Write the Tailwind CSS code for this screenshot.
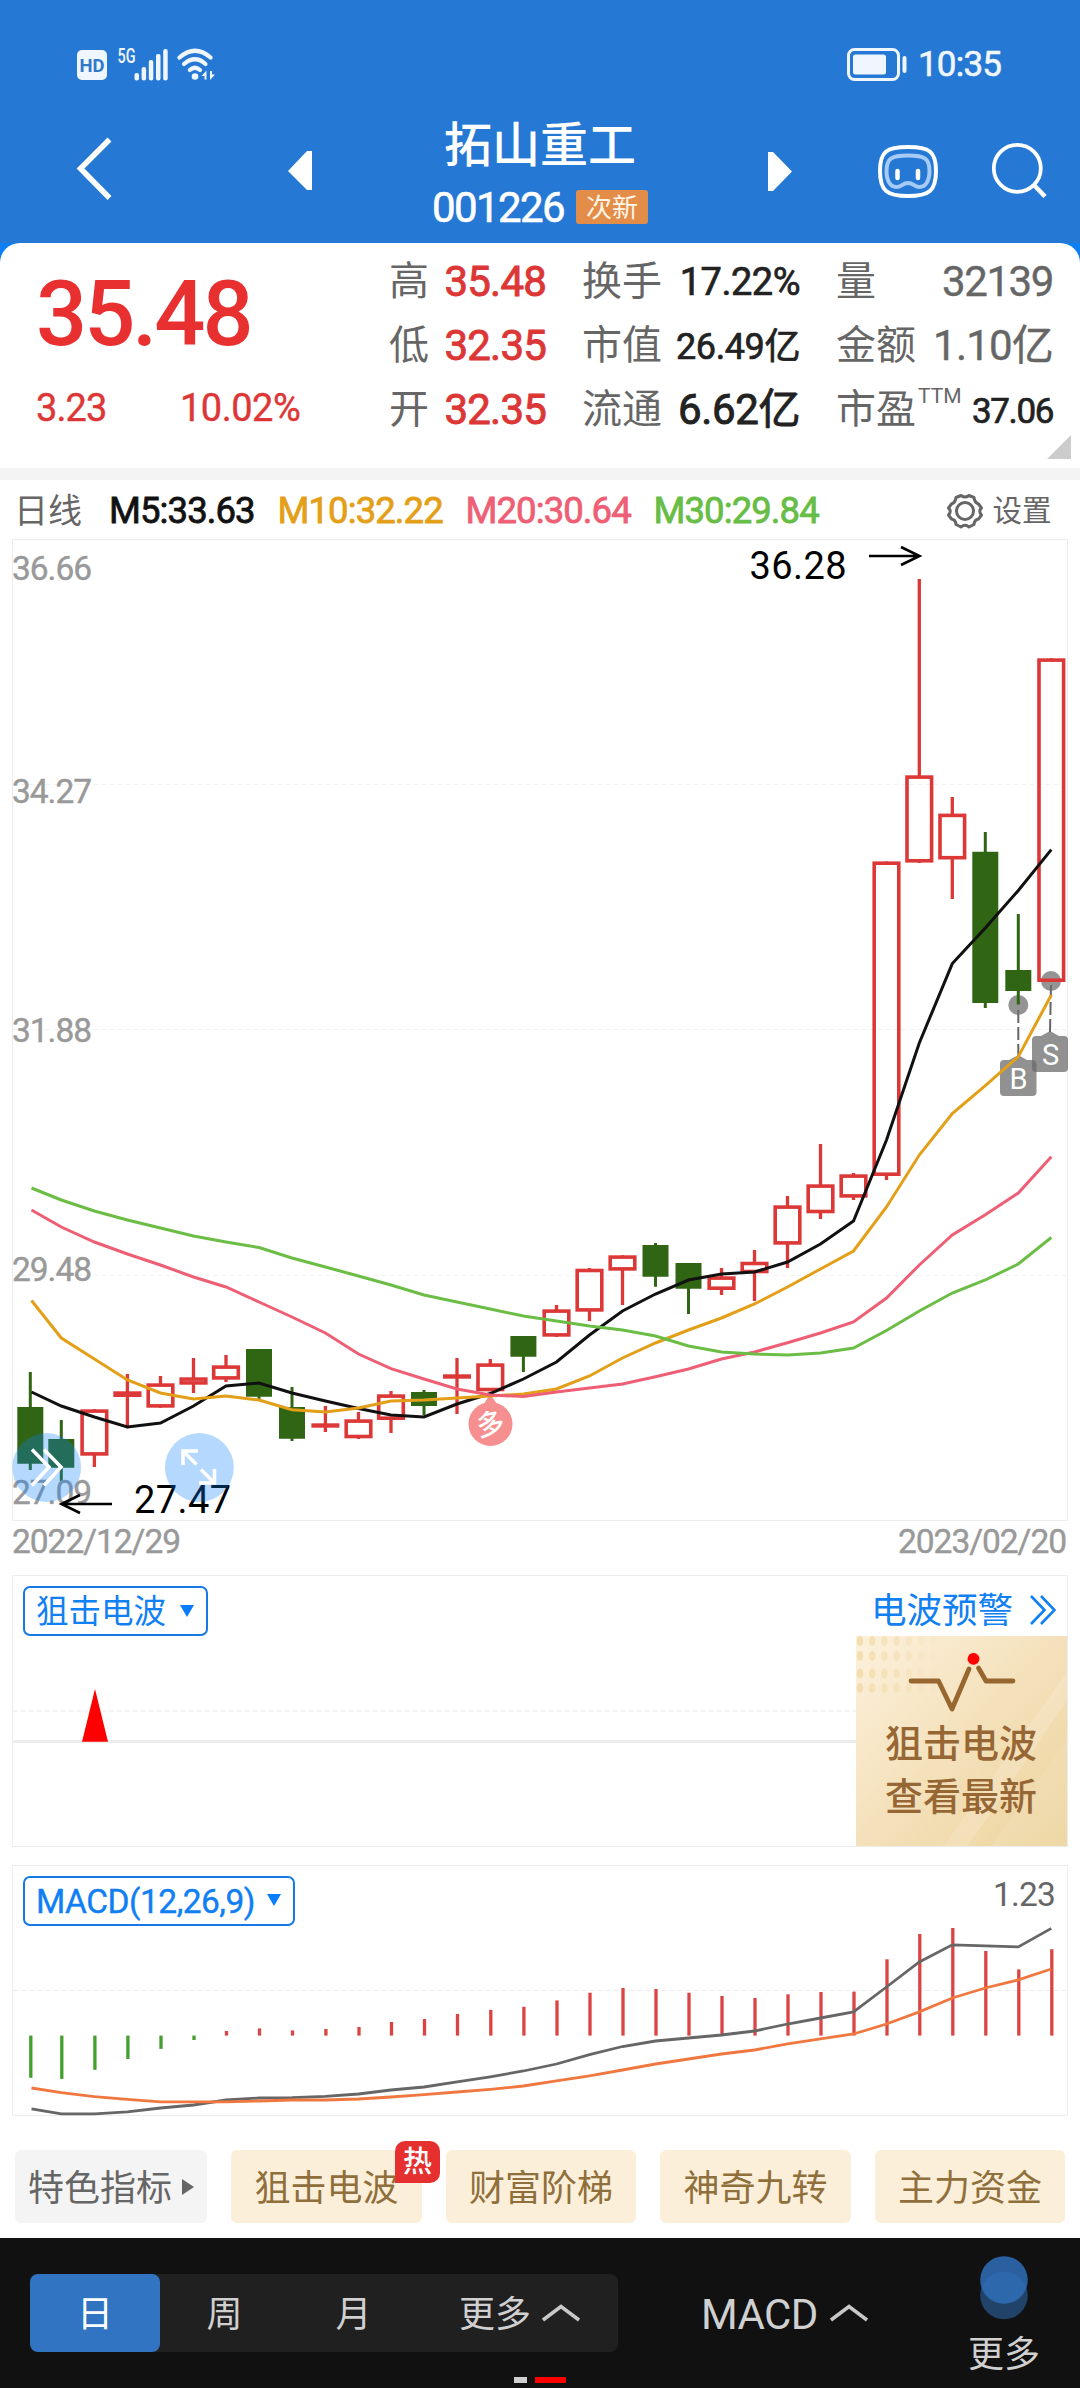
<!DOCTYPE html>
<html lang="zh-CN">
<head>
<meta charset="utf-8">
<title>拓山重工 001226</title>
<script src="https://cdn.jsdelivr.net/npm/@tailwindcss/browser@4"></script>
</head>
<body class="w-[1080px] h-[2388px] overflow-hidden bg-white font-['Roboto','Noto_Sans_CJK_SC',sans-serif] flex flex-col">

<!-- Status bar -->
<header class="bg-[#2578d4] h-[243px] shrink-0 flex flex-col text-white">
  <div class="h-[96px] flex justify-between items-start pl-[77px] pr-[75px] pt-[44px]">
    <svg class="w-[150px] h-10" viewBox="77 44 150 40" fill="#f0f6fd">
      <rect x="77" y="50" width="30" height="30" rx="5"/>
      <text x="79.500" y="71.700" font-size="19" font-weight="700" textLength="25" lengthAdjust="spacingAndGlyphs" fill="#2f78cc">HD</text>
      <text x="117.500" y="62.500" font-size="20" font-weight="500" textLength="18" lengthAdjust="spacingAndGlyphs">5G</text>
      <rect x="134.500" y="73" width="4.500" height="7.500" rx="2"/><rect x="141.600" y="67" width="4.500" height="13.500" rx="2"/><rect x="148.800" y="60" width="4.500" height="20.500" rx="2"/><rect x="156" y="54" width="4.500" height="26.500" rx="2"/><rect x="163.200" y="49" width="4.500" height="31.500" rx="2"/>
      <g fill="none" stroke="#f0f6fd" stroke-width="4.200" stroke-linecap="round"><path d="M179.500 57.500Q195 44 210.500 57.500"/><path d="M184 64Q195 54.500 205.500 64"/><path d="M189.800 70Q195 65.500 200 70"/></g>
      <circle cx="195" cy="76.500" r="3.300"/><path d="M201.500 76l5-5.500v9h-2v-3.500zM215 74.500l-5 5.500v-9h2v3.500z"/>
    </svg>
    <div class="flex items-center h-[40px] gap-[10px]">
      <svg class="w-[62px] h-10" viewBox="848 44 62 40"><rect x="850.500" y="49.500" width="50" height="30" rx="6" fill="none" stroke="#f0f6fd" stroke-width="3"/><rect x="855" y="54.500" width="33" height="20" rx="2.500" fill="#f0f6fd"/><rect x="904.500" y="56" width="4" height="17" rx="2" fill="#f0f6fd"/></svg>
      <span class="text-[35px] leading-10 pt-[2px] text-[#f0f6fd] w-[87px] tracking-[-0.8px] [-webkit-text-stroke:0.6px_#f0f6fd]">10:35</span>
    </div>
  </div>
  <div class="h-[147px] flex">
    <svg class="w-[430px] h-full shrink-0" viewBox="0 96 430 147"><path d="M109.500 139.500L80.500 168.500L109.500 198" fill="none" stroke="#fff" stroke-width="5.500"/><path d="M288 171L307 151H312V190H307z" fill="#fff"/></svg>
    <div class="w-[220px] shrink-0 flex flex-col items-center pt-[22px]">
      <h1 class="text-[48px] leading-[56px] font-medium">拓山重工</h1>
      <div class="flex items-center gap-[12px] h-[34px] mt-[16px]">
        <span class="text-[42px] leading-[34px] pt-[2px] tracking-[-1.6px] [-webkit-text-stroke:0.6px_#fff]">001226</span>
        <span class="bg-[#e48d48] rounded-[3px] w-[72px] h-[34px] text-[26px] leading-[36px] text-center text-[#fff6ea]">次新</span>
      </div>
    </div>
    <svg class="w-[430px] h-full shrink-0" viewBox="650 96 430 147" fill="none" stroke="#fff"><path d="M792 171.500L773 152H768V191H773z" fill="#fff" stroke="none"/>
      <path d="M908 147c21 0 28 4 28 24s-7 25-28 25-28-5-28-25 7-24 28-24z" stroke-width="4"/>
      <path d="M908 155.500c17 0 21.500 3 21.500 15.500 0 10-4 16-10 16-5 0-6-4-11.500-4s-6.500 4-11.500 4c-6 0-10-6-10-16 0-12.500 4.500-15.500 21.500-15.500z" stroke="#a6cbf5" stroke-width="4"/>
      <path d="M897.500 171v7M918 171v7" stroke-width="4.500" stroke-linecap="round"/>
      <circle cx="1017.300" cy="168.300" r="23.500" stroke-width="3.800"/><path d="M1033.500 184.500L1045 196.500" stroke-width="4.500"/></svg>
  </div>
</header>

<!-- Quote summary -->
<section class="bg-[#0d7ff5] h-[225px] shrink-0">
  <div class="relative bg-white rounded-t-[20px] h-full flex">
    <div class="w-[389px] pl-[36px] pt-[32px] flex flex-col shrink-0">
      <span class="text-[90px] leading-[80px] font-medium text-[#e93030] tracking-[-3px]">35.48</span>
      <div class="flex text-[38px] leading-[44px] text-[#dc3636] mt-[31px] [-webkit-text-stroke:0.4px_#dc3636]"><span class="w-[144px] tracking-[-0.9px]">3.23</span><span class="tracking-[-0.5px]">10.02%</span></div>
    </div>
    <div class="pt-[7px] grid grid-cols-[157px_218px_217px] gap-x-[36px] text-[40px] leading-[64px] h-[198px] auto-rows-[64px] text-[#666]">
      <div class="flex justify-between"><span>高</span><span class="text-[42px] tracking-[-0.8px] text-[#dc3636] [-webkit-text-stroke:0.9px_#dc3636]">35.48</span></div>
      <div class="flex justify-between items-baseline"><span>换手</span><span class="text-[38px] tracking-[-0.5px] text-[#222] [-webkit-text-stroke:0.7px_#222]">17.22%</span></div>
      <div class="flex justify-between"><span>量</span><span class="text-[42px] tracking-[-1.4px] [-webkit-text-stroke:0.4px_#666]">32139</span></div>
      <div class="flex justify-between"><span>低</span><span class="text-[42px] tracking-[-0.8px] text-[#dc3636] [-webkit-text-stroke:0.9px_#dc3636]">32.35</span></div>
      <div class="flex justify-between items-baseline"><span>市值</span><span class="text-[36px] tracking-[-0.4px] text-[#222] [-webkit-text-stroke:0.7px_#222]">26.49亿</span></div>
      <div class="flex justify-between"><span>金额</span><span class="text-[42px] tracking-[-0.8px] [-webkit-text-stroke:0.4px_#666]">1.10亿</span></div>
      <div class="flex justify-between"><span>开</span><span class="text-[42px] tracking-[-0.8px] text-[#dc3636] [-webkit-text-stroke:0.9px_#dc3636]">32.35</span></div>
      <div class="flex justify-between"><span>流通</span><span class="text-[42px] tracking-[-0.4px] text-[#222] [-webkit-text-stroke:0.9px_#222]">6.62亿</span></div>
      <div class="flex justify-between items-baseline"><span class="flex">市盈<span class="text-[21px] leading-[36px] ml-[2px]">TTM</span></span><span class="text-[35px] tracking-[-1.4px] text-[#222] [-webkit-text-stroke:0.7px_#222]">37.06</span></div>
    </div>
    <svg class="absolute right-[9px] bottom-[9px] w-6 h-6" viewBox="0 0 24 24"><path d="M24 0V24H0z" fill="#ccc"/></svg>
  </div>
</section>
<div class="h-[12px] bg-[#f4f4f4] shrink-0"></div>

<!-- Moving averages -->
<div class="h-[59px] shrink-0 flex items-center pl-[14px] pt-[3px] text-[36.500px] leading-[56px] tracking-[-0.9px]">
  <span class="text-[34px] text-[#666] w-[95px] tracking-normal">日线</span>
  <span class="w-[168.500px] text-[#111] [-webkit-text-stroke:0.8px_#111]">M5:33.63</span>
  <span class="w-[188px] text-[#e39f18] [-webkit-text-stroke:0.8px_#e39f18]">M10:32.22</span>
  <span class="w-[188px] text-[#ee5f75] [-webkit-text-stroke:0.8px_#ee5f75]">M20:30.64</span>
  <span class="w-[292px] text-[#67bd45] [-webkit-text-stroke:0.8px_#67bd45]">M30:29.84</span>
  <svg class="w-[38px] h-[38px] -mt-px" viewBox="-19 -19 38 38" fill="none" stroke="#666" stroke-width="3"><circle r="8.500"/><path stroke-linejoin="round" d="M-4 -15.500Q0 -12.500 4 -15.500L9 -13.500Q9.500 -8.500 13.500 -7L16.500 -3Q13 0 16.500 4L13.500 8Q9.500 8.500 9 13.500L4 16Q0 12.500 -4 16L-9 13.500Q-9.500 8.500 -13.500 8L-16.500 4Q-13 0 -16.500 -3L-13.500 -7Q-9.500 -8.500 -9 -13.500z"/></svg>
  <span class="text-[29.500px] text-[#666] tracking-normal ml-[9px]">设置</span>
</div>

<!-- Daily candles -->
<svg class="w-[1080px] h-[1036px] shrink-0 block" viewBox="0 539 1080 1036">
  <g fill="none" stroke="#ededed"><rect x="12.500" y="539.500" width="1055" height="981"/><path stroke-dasharray="5 3" stroke="#f1f1f1" d="M13 784.500H1067M13 1029.500H1067M13 1275.500H1067"/></g>
  <g fill="none" stroke="#666" stroke-width="2" stroke-dasharray="13 4"><path d="M1018.300 1010V1056M1051 985L1050 1032"/></g>
  <g fill="#6b6b6b" fill-opacity=".72"><circle cx="1018.300" cy="1005" r="10"/><circle cx="1051" cy="981" r="10"/></g>
  <g id="candles"></g>
  <g fill="#6b6b6b" fill-opacity=".74"><path d="M1004 1060H1009L1018.300 1055L1027 1060H1032.500a4 4 0 0 1 4 4V1092a4 4 0 0 1-4 4H1004a4 4 0 0 1-4-4V1064a4 4 0 0 1 4-4z"/><path d="M1036 1036H1041L1050 1031L1059 1036H1064a4 4 0 0 1 4 4V1068a4 4 0 0 1-4 4H1036a4 4 0 0 1-4-4V1040a4 4 0 0 1 4-4z"/></g>
  <g fill="#fff" font-size="29" text-anchor="middle"><text x="1018.500" y="1089">B</text><text x="1050.500" y="1065">S</text></g>
  <path d="M490 1394L497 1404H484z" fill="#f68f8f"/><circle cx="490.500" cy="1424" r="22" fill="#f68f8f"/>
  <text x="490.500" y="1434" font-size="28" font-weight="500" text-anchor="middle" fill="#fff" transform="rotate(-12 490.500 1424)">多</text>
  <g id="averages" fill="none" stroke-width="3"></g>
  <g fill="#999" font-size="33.500" stroke="#999" stroke-width=".4">
    <text x="12" y="580" textLength="80">36.66</text><text x="12" y="803" textLength="80">34.27</text><text x="12" y="1042" textLength="80">31.88</text><text x="12" y="1281" textLength="80">29.48</text><text x="12" y="1504" textLength="80">27.09</text>
    <text x="12" y="1553" textLength="169">2022/12/29</text><text x="898" y="1553" textLength="169">2023/02/20</text>
  </g>
  <g font-size="38" fill="#000"><text x="749.500" y="579" textLength="97">36.28</text><text x="134" y="1512.500" textLength="97">27.47</text></g>
  <g fill="none" stroke="#000" stroke-width="2.600"><path d="M869 556H919M901 547L919.500 556L901 565"/><path d="M112 1504H62M80 1495L61.500 1504L80 1513"/></g>
  <g fill="#0a7dff" fill-opacity=".3"><circle cx="46.700" cy="1467.500" r="34.400"/><circle cx="199.400" cy="1467.500" r="34.400"/></g>
  <g fill="none" stroke="#fff" stroke-width="3.500"><path d="M32 1449.500L49 1467L32 1485.500M44 1449.500L61 1467L44 1485.500"/><path d="M183 1465V1451H198M184 1452L196.500 1464.500M201 1469.500L213.500 1482M199 1483H214.500V1469"/></g>
</svg>

<!-- Signal wave panel -->
<section class="relative mx-[12px] h-[272px] w-[1056px] shrink-0 border border-[#ededed]">
  <svg class="block w-[1054px] h-[270px]" viewBox="13 1576 1054 270"><path d="M13 1711H856" stroke="#f4f4f4" stroke-width="2" stroke-dasharray="5 3"/><path d="M13 1741.500H856" stroke="#ededed" stroke-width="3"/><path d="M95 1689L108 1741.800H82z" fill="#f00"/></svg>
  <button class="absolute left-[10px] top-[10px] w-[185px] h-[50px] border-2 border-[#1779e4] rounded-[7px] flex items-center pl-[11px] pt-[2px] gap-[14px] text-[#1180f2] text-[32.500px] leading-none">狙击电波<svg class="w-[14px] h-3 mb-[3px]" viewBox="0 0 14 12"><path d="M0 0H14L7 12z" fill="#0a7dff"/></svg></button>
  <div class="absolute right-[11px] top-[12px] flex items-center gap-[17px] h-[44px] text-[#1180f2] text-[35.500px] leading-[44px]"><span class="pt-[2px]">电波预警</span><svg class="w-[26px] h-[30px]" viewBox="0 0 26 30" fill="none" stroke="#1180f2" stroke-width="2.600"><path d="M1 1L14.500 15L1 29M11 1L24.500 15L11 29"/></svg></div>
  <div class="absolute right-0 bottom-0 w-[211px] h-[210px] bg-linear-to-br from-[#fdf1dc] via-[#f4e1bb] to-[#edd39c]">
    <svg class="block w-[211px] h-[80px]" viewBox="856 1636 211 80" overflow="visible">
      <path d="M944 1846L1067 1672V1700L968 1846z" fill="#fff" fill-opacity=".16"/><path d="M991 1846L1067 1740V1846z" fill="#fff" fill-opacity=".1"/>
      <g id="dots" fill="#f2dcae"></g>
      <g fill="none" stroke="#98672f" stroke-width="4.800" stroke-linejoin="round"><path d="M911 1681H938.500L952 1709L969 1669M978.500 1668L986 1681H1013" stroke-linecap="round"/></g><circle cx="973.500" cy="1659" r="7" fill="#f9d8bb"/><circle cx="973.500" cy="1658.800" r="5.900" fill="#f00"/>
    </svg>
    <p class="relative pt-[2px] pr-px text-center text-[38px] leading-[53px] font-medium text-[#966735]">狙击电波<br>查看最新</p>
  </div>
</section>

<!-- MACD panel -->
<section class="relative mx-[12px] mt-[18px] h-[251px] w-[1056px] shrink-0 border border-[#ededed]">
  <svg class="block w-[1054px] h-[249px] overflow-visible" viewBox="13 1866 1054 249"><path d="M13 1990.500H1067" stroke="#ededed" stroke-dasharray="5 3"/><g id="macd" fill="none"></g></svg>
  <button class="absolute left-[10px] top-[10px] w-[272px] h-[50px] border-2 border-[#1779e4] rounded-[7px] flex items-center justify-between pl-[11px] pr-[12px] pt-[2px] text-[#0f7ff3] text-[33.500px] leading-none tracking-[-0.5px] [-webkit-text-stroke:0.4px_#0f7ff3]">MACD(12,26,9)<svg class="w-[14px] h-3 mb-[5px]" viewBox="0 0 14 12"><path d="M0 0H14L7 12z" fill="#0a7dff"/></svg></button>
  <span class="absolute right-[12px] top-[9px] text-[33.500px] leading-10 text-[#666] tracking-[-0.8px]">1.23</span>
</section>

<!-- Featured indicators -->
<nav class="h-[122px] shrink-0 pt-[34px] px-[15px] flex justify-between text-[36px] leading-[78px] text-[#8f6f3c] text-center">
  <div class="w-[192px] h-[73px] rounded-md bg-[#f4f4f4] text-[#666] flex items-start justify-center gap-[10px]">特色指标<svg class="w-3 h-4 mt-[29px]" viewBox="0 0 12 16"><path d="M0 0L12 8L0 16z" fill="#666"/></svg></div>
  <div class="relative w-[191px] h-[73px] rounded-md bg-[#fcefd9]">狙击电波<span class="absolute left-[164px] top-[-9px] w-[45px] h-[42px] rounded-[10px] rounded-bl-none bg-[#e63030] text-white text-[29px] leading-[43px] font-medium">热</span></div>
  <div class="w-[190px] h-[73px] rounded-md bg-[#fcefd9]">财富阶梯</div>
  <div class="w-[191px] h-[73px] rounded-md bg-[#fcefd9]">神奇九转</div>
  <div class="w-[190px] h-[73px] rounded-md bg-[#fcefd9]">主力资金</div>
</nav>

<!-- Period bar -->
<footer class="relative h-[150px] shrink-0 bg-[#111] flex pl-[30px] pt-[36px] text-[36px] leading-[82px] text-[#d0d0d0]">
  <div class="w-[588px] h-[78px] rounded-lg bg-[#202020] flex text-center">
    <span class="w-[130px] h-[78px] rounded-lg bg-[#3174c1] text-white">日</span>
    <span class="w-[129px]">周</span><span class="w-[129px]">月</span>
    <span class="pl-[41px] flex items-start gap-[11px]">更多<svg class="w-[38px] h-[18px] mt-[30px]" viewBox="0 0 38 18" fill="none" stroke="#c8c8c8" stroke-width="3.500"><path d="M1 16L19 2.500L37 16"/></svg></span>
  </div>
  <div class="ml-[83px] h-[78px] w-[170px] flex items-start gap-[12px] text-[42px] tracking-[-0.6px]">MACD<svg class="w-[38px] h-[18px] mt-[30px] shrink-0" viewBox="0 0 38 18" fill="none" stroke="#c8c8c8" stroke-width="3.500"><path d="M1 16L19 2.500L37 16"/></svg></div>
  <div class="ml-[83px] -mt-[18px] w-[100px] flex flex-col items-center">
    <svg class="w-[48px] h-[64px]" viewBox="0 0 48 64"><circle cx="24" cy="39.500" r="23.800" fill="#3174c1" fill-opacity=".5"/><circle cx="24" cy="24" r="23.800" fill="#2f6fba" fill-opacity=".85"/></svg>
    <span class="leading-[54px] mt-[8px]">更多</span>
  </div>
  <div class="absolute left-[514px] bottom-[5px] flex gap-2"><i class="w-[13px] h-[6px] bg-[#d0d0d0]"></i><i class="w-[31px] h-[6px] bg-[#f00]"></i></div>
</footer>

<script>
const xs=[30.3,61.3,94.4,127.4,160.5,193.5,226,259,292,325.4,358.5,391,424,457,490.3,523.4,556.5,589.5,622.5,655.5,688.5,721.5,754.5,787.5,820.5,853.5,886.5,919.3,952.3,985.3,1018.3,1051.3];
// colour, high, body top, body bottom, low
const bars=[['g',1372,1407,1463.7,1470],['g',1420,1439,1467.7,1481],['r',1409.3,1409.3,1455.7,1467],['r',1374,1391.3,1397,1428.3],['r',1376,1383.3,1407.7,1407.7],['r',1358,1377.3,1384.7,1393],['r',1355,1365.3,1379.7,1382],['g',1349,1349,1396.7,1399],['g',1387,1407,1438.7,1441],['r',1406,1423.3,1427.7,1432],['r',1412,1419.3,1438.3,1439],['r',1391,1394.3,1420,1433],['g',1390,1392,1406,1415.3],['r',1358,1374.3,1378.7,1414],['r',1359,1363.3,1391.3,1391.3],['g',1336,1336,1356.7,1372],['r',1305,1309.3,1336.7,1337],['r',1268,1268.7,1311.7,1321],['r',1255.3,1255.3,1270.7,1305],['g',1243,1245,1276.7,1286.7],['g',1263,1263,1288.7,1314],['r',1268,1276.3,1290,1295],['r',1250,1261.7,1273.3,1301],['r',1196,1205.3,1244.7,1268],['r',1144,1184.3,1213.3,1219],['r',1173,1174.3,1197.7,1200],['r',861.4,861.4,1176,1180],['r',579,775.3,862.6,863],['r',797,813.6,859.5,899],['g',832,851.8,1003,1008],['g',914,970,991,1004.5],['r',658.3,658.3,982,982]];
document.getElementById('candles').innerHTML=bars.map(([c,h,t,b,l],i)=>{
  const x=xs[i];
  if(c==='g')return `<path d="M${x-13} ${t}h26v${b-t}h-26zM${x-1.5} ${h}h3v${l-h}h-3z" fill="#306613"/>`;
  const hh=b-t-3.6;
  return `<path d="M${x} ${h}V${t+1}M${x} ${b-1}V${l}" stroke="#dc3838" stroke-width="3.3"/>`+(hh>1.5?`<rect x="${x-12.3}" y="${t+1.8}" width="24.6" height="${hh}" fill="none" stroke="#dc3838" stroke-width="3.6"/>`:`<rect x="${x-14}" y="${t}" width="28" height="${b-t}" fill="#dc3838"/>`);
}).join('');
const line=(ys,c,w=3)=>`<polyline points="${ys.map((y,i)=>(i?xs[i]:31.5)+','+y).join(' ')}" stroke="${c}" stroke-width="${w}"/>`;
document.getElementById('averages').innerHTML=
 line([1392,1406,1417,1427,1423,1406,1386,1383,1393,1401,1408.5,1415,1417,1404,1393.5,1379,1362,1335,1311,1294,1280,1274,1272,1262,1244,1221,1140,1043,963.6,928,890.5,849.6],'#111')+
 line([1300.5,1338,1359,1380,1393,1399,1396,1400,1409.7,1412,1408,1401,1400,1398,1396,1394,1389,1376,1358,1343,1330,1318,1304,1287,1269,1251,1207,1155,1113.5,1085.7,1056.6,995],'#e39f18')+
 line([1210,1227,1242,1254,1265,1277,1287,1302,1317,1333,1354,1368.7,1379,1389,1395,1396.5,1392,1388,1384,1376.7,1369,1359,1352,1342.7,1333,1322,1298,1265,1235,1214.7,1193,1156.7],'#ee5f75')+
 line([1188,1200,1211,1220,1228,1236,1242,1247.5,1258,1267,1276,1285,1295,1302,1309,1316,1321,1326,1330,1336,1346,1352,1354,1355,1353,1348,1330.5,1311,1293,1280,1264,1237.5],'#6cbd45');
const hist=[2077.8,2078.9,2069.8,2059,2048.9,2040,2031,2028.4,2030.4,2029,2027,2022,2019,2014,2009.8,2006.8,2000.4,1992.7,1988,1989,1992.7,1996,1998,1994.3,1992,1991.6,1959.3,1934,1928,1951,1969.4,1949.2];
document.getElementById('macd').innerHTML=
 hist.map((y,i)=>`<path d="M${xs[i]+.5} 2035.6V${y}" stroke="${y>2035?'#43a02f':'#dc4444'}" stroke-width="3.3"/>`).join('')+
 line([2108.8,2113.9,2113.9,2111.9,2108,2105,2100,2098,2097.7,2096.4,2094,2090,2087,2081.9,2076.8,2071,2064,2054.6,2046.5,2041,2038,2035,2031,2024,2018,2011.9,1987,1962,1944.8,1945.9,1946.9,1928.4],'#666',2.8)+
 line([2088,2092.7,2096.7,2099.4,2101.8,2101.8,2101.8,2101,2100,2100,2099,2097,2094.7,2092,2089.3,2086,2080.9,2075.8,2070,2064,2059,2054,2050,2043.8,2038.8,2034,2024,2011.9,1998,1988,1979.9,1969],'#f07840',2.8);
document.getElementById('dots').innerHTML=[1641,1656,1673.5,1688].flatMap(y=>[0,1,2,3,4,5,6].map(i=>`<ellipse cx="${860+i*12.2}" cy="${y}" rx="3.2" ry="5" fill-opacity="${.95-i*.14}"/>`)).join('');
</script>
</body>
</html>
